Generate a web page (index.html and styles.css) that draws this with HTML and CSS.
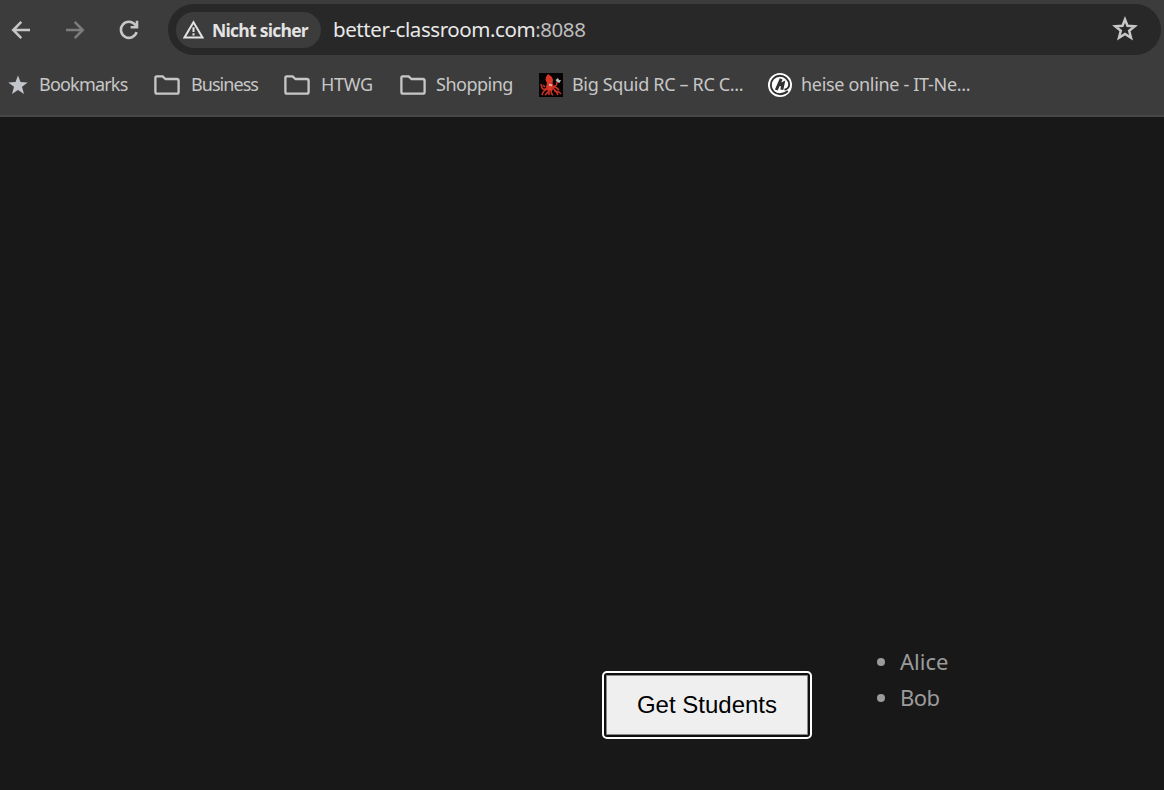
FILE: index.html
```html
<!DOCTYPE html>
<html lang="de">
<head>
<meta charset="utf-8">
<title>better-classroom.com</title>
<link rel="stylesheet" href="styles.css">
</head>
<body>
<svg width="0" height="0" class="defs">
  <symbol id="folder" viewBox="0 0 26 20"><path d="M2.4 1.3H8.6L11.4 4H22.8Q24.6 4 24.6 5.8V16.9Q24.6 18.6 22.8 18.6H3.1Q1.4 18.6 1.4 16.9V2.8Q1.4 1.3 3 1.3Z" fill="none" stroke="#c7c7c7" stroke-width="2.3" stroke-linejoin="round"/></symbol>
</svg>
<header class="chrome">
  <div class="toolbar">
    <nav class="nav">
      <svg width="20" height="20" viewBox="0 0 20 20" fill="none" stroke="#c7c7c7" stroke-width="2.5"><path d="M19 10H3M10.3 1.8L2.2 10L10.3 18.2"/></svg>
      <svg width="20" height="20" viewBox="0 0 20 20" fill="none" stroke="#7c7c7c" stroke-width="2.5"><path d="M1 10H17M9.7 1.8L17.8 10L9.7 18.2"/></svg>
      <svg width="20" height="20" viewBox="0 0 20 20" fill="none" stroke="#c7c7c7" stroke-width="2.6"><path d="M17.6 12.2A8 8 0 1 1 16.2 4.8L17 5.8M18 0.8V7.2H11.6"/></svg>
    </nav>
    <div class="omnibox">
      <div class="chip">
        <svg width="22" height="19" viewBox="0 0 22 19"><path d="M10.5 2.2L19.500 17.4H1.500Z" fill="none" stroke="#e3e3e3" stroke-width="2"/><path d="M10.5 7.3V12M10.5 13.3V15.4" stroke="#e3e3e3" stroke-width="2"/></svg>
        <span class="chip-text">Nicht sicher</span>
      </div>
      <div class="url">better-classroom.com<span class="port">:8088</span></div>
      <svg class="fav" width="26" height="26" viewBox="0 0 26 26"><path d="M13 3.5L15.5 9.8L22.7 10.3L17.2 14.8L19 21.8L13 18L7 21.8L8.8 14.8L3.3 10.3L10.5 9.8Z" fill="none" stroke="#c7c7c7" stroke-width="2.5"/></svg>
    </div>
  </div>
  <div class="bookmarks">
    <a class="bm bm-star"><svg width="20" height="20" viewBox="0 0 20 20"><path d="M10 0.5L12.5 7L19.7 7.4L14 11.8L16 19L10 15L4 19L6 11.8L0.3 7.4L7.5 7Z" fill="#c2c6cc"/></svg><span>Bookmarks</span></a>
    <a class="bm bm-business"><svg width="26" height="20"><use href="#folder"/></svg><span>Business</span></a>
    <a class="bm bm-htwg"><svg width="26" height="20"><use href="#folder"/></svg><span>HTWG</span></a>
    <a class="bm bm-shopping"><svg width="26" height="20"><use href="#folder"/></svg><span>Shopping</span></a>
    <a class="bm bm-squid"><svg width="24" height="24" viewBox="0 0 24 24"><path d="M0 0H24V24H0Z" fill="#050303"/><path d="M9 1L13 4L14 7L13.5 10L15 14L13 18H9L7 14L8 10L6.5 7L7 4Z" fill="#d93828"/><path d="M9 14Q5 18 3 15L2 11M9 16Q4 17 3 22M10 17Q9 20 6 22M12 17Q12 21 14 22M13 15Q17 17 19 22M14 14Q18 14 20 17M14 13Q18 14 18 9M10 18L10 22M6 14L4 12M15 18Q20 18 22 21" fill="none" stroke="#c93024" stroke-width="1.6"/><path d="M16.5 7L19 5L20 7L22 7L20.5 10L18 9Z" fill="#b9b9b9"/><path d="M10 11.5L13 12.5" stroke="#d8c8c0" stroke-width="1.5"/></svg><span>Big Squid RC – RC C...</span></a>
    <a class="bm bm-heise"><svg width="24" height="24" viewBox="0 0 24 24"><circle cx="12" cy="12" r="12" fill="#fff"/><path d="M19.8 18Q16.500 21.200 12 21.200A9.200 9.200 0 1 1 21.200 11.500Q21 15.800 16.500 16.800" fill="none" stroke="#303030" stroke-width="1.9"/><path d="M13.200 5.800L8.300 17M11.300 12.200L15.200 10.300L13.800 16.800" fill="none" stroke="#303030" stroke-width="3"/></svg><span>heise online - IT-Ne...</span></a>
  </div>
</header>
<main class="page">
  <button class="get" type="button">Get Students</button>
  <ul class="students"><li><span class="alice">Alice</span></li><li><span class="bob">Bob</span></li></ul>
</main>
</body>
</html>
```
FILE: styles.css
```css
* { box-sizing: border-box; }
body { margin: 0; height: 790px; overflow: hidden; display: flex; flex-direction: column; background: #181818; font-family: "Noto Sans", sans-serif; }
.defs { display: none; }
svg { display: block; flex: none; }
.chrome { height: 117px; background: #3c3c3c; border-bottom: 2px solid #474747; }
.toolbar { display: flex; padding: 4px 3px 0 11px; }
.nav { display: flex; align-items: center; gap: 34px; width: 157px; height: 51px; }
.omnibox { flex: 1; height: 51px; border-radius: 26px; background: #282828; display: flex; align-items: center; padding: 0 23px 0 8px; }
.chip { width: 145px; height: 36px; border-radius: 18px; background: #3c3c3c; display: flex; align-items: center; gap: 7px; padding-left: 7px; }
.chip-text { font-family: "Open Sans", sans-serif; font-size: 17.5px; font-weight: 700; line-height: 24px; letter-spacing: -0.75px; color: #e3e3e3; white-space: nowrap; }
.url { flex: 1; margin-left: 12px; padding-bottom: 1px; font-size: 20.5px; line-height: 28px; color: #e8e8e8; letter-spacing: -0.43px; white-space: nowrap; }
.port { color: #bdbdbd; }
.fav { margin-bottom: 1px; }
.bookmarks { display: flex; height: 60px; padding-left: 8px; }
.bm { display: flex; align-items: center; height: 60px; gap: 11px; font-size: 18px; line-height: 24px; color: #c7c7c7; white-space: nowrap; }
.bm span { padding-bottom: 2px; }
.bm-star { width: 146px; letter-spacing: -0.8px; }
.bm-business { width: 130px; letter-spacing: -0.95px; }
.bm-htwg { width: 116px; letter-spacing: -0.3px; }
.bm-shopping { width: 139px; gap: 10px; letter-spacing: -0.5px; }
.bm-squid { width: 229px; gap: 9px; letter-spacing: -0.33px; }
.bm-heise { gap: 9px; letter-spacing: -0.32px; }
.page { flex: 1; display: flex; align-items: flex-start; padding: 527px 0 0 604px; }
.get { width: 206px; height: 64px; margin-top: 29px; padding: 0; border: 2px solid #101010; border-radius: 3px; background: #efefef; color: #000; font: 24px "Liberation Sans", Arial, sans-serif; outline: 2px solid #fff; outline-offset: 0; box-shadow: inset 0 0 0 1px #8a8a8a; }
.students { margin: 0; padding: 0 0 0 90px; font-size: 22px; line-height: 36px; color: #9b9b9b; }
.students li { list-style: none; display: flex; align-items: center; height: 36px; }
.students span { padding-bottom: 2px; }
.bob { letter-spacing: -0.5px; }
.students li::before { content: ""; width: 8px; height: 8px; margin: 0 15px 0 -23px; border-radius: 50%; background: #9b9b9b; }
```
